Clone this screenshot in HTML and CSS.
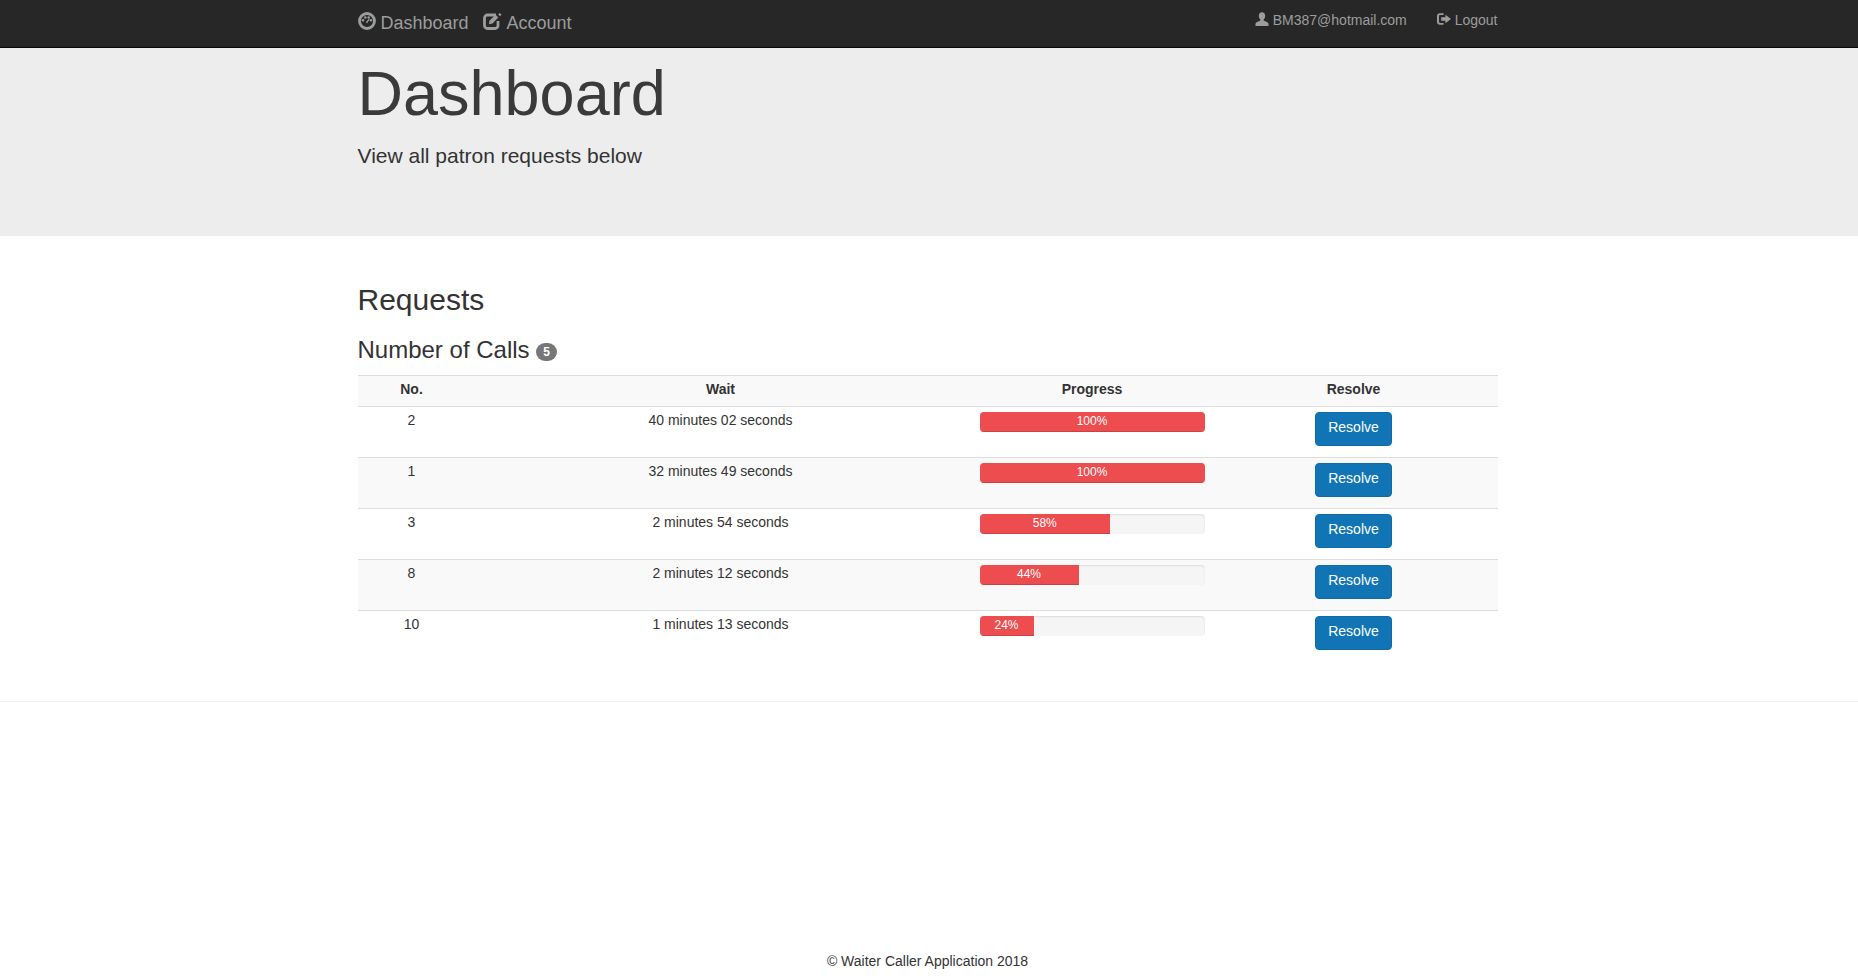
FILE: index.html
```html
<!DOCTYPE html>
<html lang="en">
<head>
<meta charset="utf-8">
<title>Dashboard</title>
<link rel="stylesheet" href="styles.css">
</head>
<body>
<nav class="navbar">
  <div class="container nav-inner">
    <ul class="nav-left">
      <li><svg class="icon icon-lg" viewBox="0 0 18 18"><circle class="ring" cx="9" cy="9" r="7.500"/><circle cx="5" cy="8.200" r="1.300"/><circle cx="7.300" cy="5.500" r="1.300"/><circle cx="10.700" cy="5.500" r="1.300"/><circle cx="13" cy="8.200" r="1.300"/><path d="M7.800 10.300l3-3.600.8.600-2.400 3.900z"/></svg> Dashboard</li>
      <li><svg class="icon icon-edit" viewBox="0 0 20 18"><path class="ring" d="M13 3H4.500A3 3 0 0 0 1.500 6v7.500a3 3 0 0 0 3 3H12a3 3 0 0 0 3-3V9"/><path d="M6.500 8.500l6.200-5.700 2.600 2.600-5.800 6.100-3.600.7zM16.800 1l1.700 1.700-1.500 1.500-1.700-1.700z"/></svg> Account</li>
    </ul>
    <ul class="nav-right">
      <li><svg class="icon" viewBox="0 0 14 14"><path d="M7 .2c2 0 3.200 1.500 3.200 3.600 0 1.500-.7 3-1.500 3.800-.3.500-.2 1 .3 1.200l3 1.300c1 .5 1.500 1.200 1.500 2.100V14H.5v-1.800c0-.9.500-1.600 1.500-2.100l3-1.300c.5-.2.600-.7.300-1.200C4.500 6.800 3.800 5.300 3.800 3.800 3.800 1.700 5 .2 7 .2z"/></svg> BM387@hotmail.com</li>
      <li><svg class="icon" viewBox="0 0 15 14"><path d="M3 .8h4v2H3.300c-.7 0-1.200.5-1.200 1.200v6c0 .7.500 1.200 1.200 1.200H7v2H3c-1.700 0-3-1.300-3-3V3.800C0 2.100 1.300.8 3 .8z"/><path d="M9 2.500L15 7l-6 4.500V9H4.500V5H9z"/></svg> Logout</li>
    </ul>
  </div>
</nav>
<header class="jumbotron">
  <div class="container">
    <h1>Dashboard</h1>
    <p>View all patron requests below</p>
  </div>
</header>
<main class="container content">
  <h2>Requests</h2>
  <h3>Number of Calls <span class="badge">5</span></h3>
  <table class="requests">
    <colgroup><col class="c-no"><col class="c-wait"><col class="c-progress"><col class="c-resolve"></colgroup>
    <thead><tr><th>No.</th><th>Wait</th><th>Progress</th><th>Resolve</th></tr></thead>
    <tbody>
      <tr><td>2</td><td>40 minutes 02 seconds</td><td><div class="progress"><div class="bar" style="width:100%">100%</div></div></td><td><button class="btn">Resolve</button></td></tr>
      <tr><td>1</td><td>32 minutes 49 seconds</td><td><div class="progress"><div class="bar" style="width:100%">100%</div></div></td><td><button class="btn">Resolve</button></td></tr>
      <tr><td>3</td><td>2 minutes 54 seconds</td><td><div class="progress"><div class="bar" style="width:58%">58%</div></div></td><td><button class="btn">Resolve</button></td></tr>
      <tr><td>8</td><td>2 minutes 12 seconds</td><td><div class="progress"><div class="bar" style="width:44%">44%</div></div></td><td><button class="btn">Resolve</button></td></tr>
      <tr><td>10</td><td>1 minutes 13 seconds</td><td><div class="progress"><div class="bar" style="width:24%">24%</div></div></td><td><button class="btn">Resolve</button></td></tr>
    </tbody>
  </table>
</main>
<hr class="rule">
<footer class="footer">© Waiter Caller Application 2018</footer>
</body>
</html>
```
FILE: styles.css
```css
* { box-sizing: border-box; }
html, body { margin: 0; height: 100%; }
body {
  font-family: "Liberation Sans", Arial, sans-serif;
  font-size: 14px;
  line-height: 20px;
  color: #333;
  background: #fff;
  display: flex;
  flex-direction: column;
  height: 979px;
  overflow: hidden;
}
.container { width: 1140px; margin: 0 0 0 357.500px; }
.navbar {
  height: 48px;
  flex: none;
  background: #272727;
  border-bottom: 1px solid #080808;
  color: #9d9d9d;
}
.nav-inner { display: flex; justify-content: space-between; }
.nav-left, .nav-right { list-style: none; margin: 0; padding: 0; display: flex; }
.nav-left { font-size: 18px; gap: 14px; padding-top: 12px; line-height: 20px; }
.nav-right { gap: 30px; padding-top: 10px; }
.icon { width: 14px; height: 14px; fill: currentColor; vertical-align: -1px; }
.icon-lg { width: 18px; height: 18px; vertical-align: -1px; }
.icon-edit { width: 20px; height: 18px; vertical-align: -1px; }
.ring { fill: none; stroke: currentColor; stroke-width: 2.800; }
.jumbotron { height: 188px; flex: none; background: #ededed; }
.jumbotron h1 { margin: 0; padding-top: 11px; font-size: 63px; line-height: 69px; font-weight: normal; color: #3a3a3a; }
.jumbotron p { margin: 13px 0 0; font-size: 21px; line-height: 30px; }
.content { flex: none; }
.content h2 { margin: 27px 0 0; padding-top: 20px; font-size: 30px; line-height: 33px; font-weight: normal; }
.content h3 { margin: 11px 0 0; padding-top: 10px; font-size: 24px; line-height: 26px; font-weight: normal; }
.badge {
  display: inline-block;
  min-width: 10px;
  padding: 3px 7px;
  font-size: 12px;
  font-weight: bold;
  line-height: 12px;
  color: #fff;
  text-align: center;
  vertical-align: middle;
  background: #777;
  border-radius: 10px;
}
.requests { width: 1140px; margin-top: 12px; border-collapse: collapse; table-layout: fixed; }
.c-no { width: 107px; }
.c-wait { width: 510px; }
.c-progress { width: 235px; }
.c-resolve { width: 288px; }
.requests th, .requests td { padding: 5px; text-align: center; vertical-align: top; border-top: 1px solid #ddd; }
.requests th { height: 31px; padding: 3px 5px 7px; background: #f9f9f9; border-bottom: 1px solid #ddd; }
.requests td { height: 51px; }
.requests td:nth-child(-n+2) { padding-top: 3px; }
.requests th:nth-child(1), .requests td:nth-child(1) { padding-left: 6px; }
.requests th:nth-child(2), .requests td:nth-child(2) { padding-left: 7px; }
.requests tbody tr:nth-child(even) td { background: #f9f9f9; }
.progress { height: 20px; background: #f5f5f5; border-radius: 4px; overflow: hidden; box-shadow: inset 0 1px 2px rgba(0,0,0,.1); }
.bar { height: 20px; background: #ee4d50; color: #fff; font-size: 12px; line-height: 18px; text-align: center; box-shadow: inset 0 -1px 0 rgba(0,0,0,.15); }
.btn {
  display: inline-block;
  height: 34px;
  padding: 4px 12px 8px;
  font: 14px/20px "Liberation Sans", Arial, sans-serif;
  color: #fff;
  background: #1175b5;
  border: 1px solid #0f6aa5;
  border-radius: 4px;
}
.rule { width: 100%; margin: 39px 0 0; border: 0; border-top: 1px solid #eee; flex: none; }
.footer { margin-top: auto; padding: 0 3px 8px 0; text-align: center; }
```
